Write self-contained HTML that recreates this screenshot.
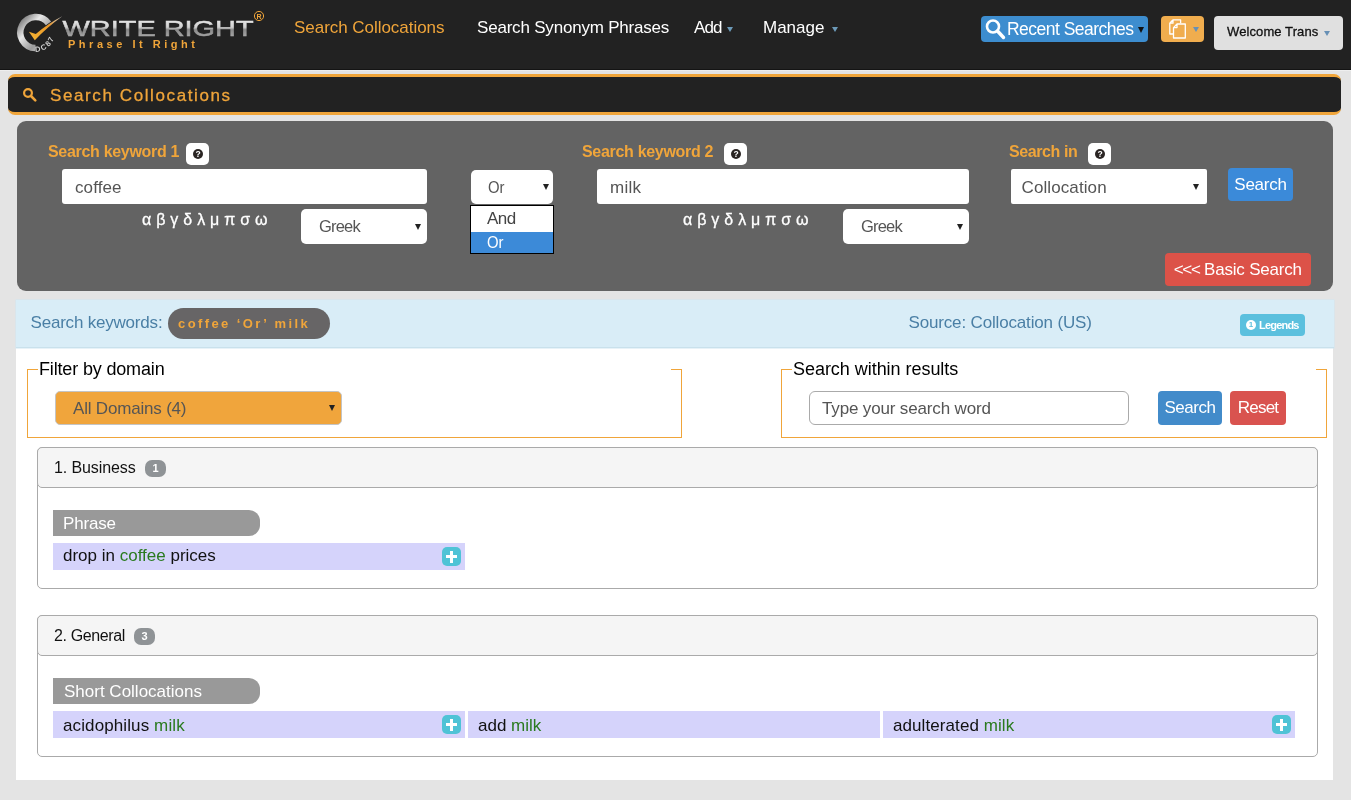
<!DOCTYPE html>
<html lang="en">
<head>
<meta charset="utf-8">
<title>Write Right - Search Collocations</title>
<style>
*{box-sizing:border-box;margin:0;padding:0}
html,body{width:1351px;height:800px;overflow:hidden}
body{will-change:transform;background:#e4e4e4;font-family:"Liberation Sans",sans-serif;color:#000;position:relative}
.abs{position:absolute}
.t{position:absolute;white-space:nowrap;line-height:1}
#hdr{position:absolute;left:0;top:0;width:1351px;height:70px;background:#222;border-bottom:1px solid #141414;box-shadow:0 1px 0 #eeeeee}
.nav{font-size:17px;color:#fff;top:19px}
.caret{position:absolute;width:0;height:0;border-left:3px solid transparent;border-right:3px solid transparent;border-top:5px solid #6c9ab8}
.btn{position:absolute;border-radius:4px;color:#fff;text-align:center;white-space:nowrap}
#titlebar{position:absolute;left:8px;top:74px;width:1333px;height:41px;background:#222;border-top:3px solid #f0a53a;border-bottom:3px solid #f0a53a;border-radius:7px}
#panel{position:absolute;left:17px;top:121px;width:1316px;height:170px;background:#636363;border-radius:9px}
.lbl{font-size:16px;font-weight:bold;color:#f0a53a}
.help{position:absolute;width:23px;height:22px;background:#fff;border-radius:5px}
.help i{position:absolute;left:6.800px;top:6px;width:10.400px;height:10.400px;border-radius:50%;background:#2a2523;color:#fff;font-style:normal;font-size:8.500px;font-weight:bold;line-height:10.800px;text-align:center}
.inp{position:absolute;background:#fff;border-radius:3px;color:#555;font-size:17px;line-height:37px;padding-left:13px;white-space:nowrap}
.sel{position:absolute;background:#fff;border-radius:5px;color:#555;font-size:17px;white-space:nowrap}
.sel b{position:absolute;right:6.500px;top:50%;margin-top:-3px;width:0;height:0;border-left:3px solid transparent;border-right:3px solid transparent;border-top:6px solid #222}
.greek{font-size:16px;color:#fff;letter-spacing:0;margin-top:1px}
#main{position:absolute;left:16px;top:301px;width:1317px;height:479px;background:#fff}
#info{position:absolute;left:0;top:-1px;width:1317.500px;height:48px;background:#d9edf7;border-bottom:1px solid #c9e1ec;box-shadow:0 0 0 0.500px #cfe6f1}
.infot{font-size:17px;color:#4a7fa5}
.fs{position:absolute;border:1px solid #f0a53a;border-top:none;height:69px !important}
.fs:before,.fs:after{content:"";position:absolute;top:0;height:1px;background:#f0a53a}
.fs:before{left:0;width:10px}
.fs:after{right:0;width:10px}
.pan{position:absolute;border:1px solid #aaa;border-radius:5px;background:#fff}
.pan .hd{position:absolute;left:-1px;top:-1px;right:-1px;height:41px;background:#f5f5f5;border:1px solid #aaa;border-radius:5px}
.badge{position:absolute;height:17px;width:21px;border-radius:7px;background:#8f9396;color:#fff;font-size:11px;font-weight:bold;line-height:17px;text-align:center}
.tag{position:absolute;height:26px;width:207px;background:#999;border-radius:0 11px 11px 0;color:#fff;font-size:17px;line-height:28px;padding-left:11px;white-space:nowrap}
.row{position:absolute;height:27px;width:412px;background:#d5d3fb;font-size:17px;line-height:26px;padding-left:10px;white-space:nowrap;color:#111}
.row em{font-style:normal;color:#2a7a1f}
.plus{position:absolute;right:4px;top:4px;width:19px;height:19px;border-radius:5px;background:#4fc3d6}
.plus:before{content:"";position:absolute;left:4.200px;top:8px;width:11px;height:3.200px;background:#fff}
.plus:after{content:"";position:absolute;left:8px;top:4.200px;width:3.200px;height:11.600px;background:#fff}

#n1{letter-spacing:-0.04px}
#n2{letter-spacing:-0.2px}
#n3{letter-spacing:-0.9px;margin-left:1px}
#rs{letter-spacing:-0.52px;font-size:17.5px !important}
#wt{letter-spacing:0.1px;-webkit-text-stroke:0.3px #111}
#tt{letter-spacing:1.6px;margin-left:-1px;margin-top:1px;-webkit-text-stroke:0.3px #f0a53a}
#pt{letter-spacing:2.41px;margin-top:0px}
.lbl{margin-top:1px}
#l1,#l2{letter-spacing:-0.31px}
#l3{letter-spacing:-0.41px}
#i1t{letter-spacing:0.1px}
#i2t{letter-spacing:0.27px}
.greek{letter-spacing:0.25px;-webkit-text-stroke:0.3px #fff}
#s1t,#s2t{letter-spacing:-0.8px;font-size:16.500px}
#sort,#ddor{display:inline-block;transform:scaleX(0.875);transform-origin:0 50%}
#ddand{letter-spacing:-0.55px}
#bst{letter-spacing:-0.26px}
#s3t{letter-spacing:0.1px;margin-left:-0.500px}
#bbt{letter-spacing:-0.2px;margin-left:-0.5px}
#sk{letter-spacing:-0.2px;margin-left:-0.500px}
.infot{margin-top:1px}
#src{letter-spacing:-0.16px;margin-left:-0.500px}
#lgt{letter-spacing:-0.8px}
#fl1{letter-spacing:-0.16px}
#fl2{letter-spacing:-0.04px}
#sdt{letter-spacing:-0.19px}
#swit{letter-spacing:-0.15px}
#b2t{letter-spacing:-0.44px}
#b3t{letter-spacing:-0.75px}
#p1t{letter-spacing:-0.1px}
#p2t{letter-spacing:-0.38px}
#tg1{letter-spacing:-0.16px;margin-left:-1px}
#r2{letter-spacing:0.11px}
#r2,#r3,#r4{position:relative;top:1.700px}
#r1{position:relative;top:0.400px}
#r4{letter-spacing:0.08px}
</style>
</head>
<body>
<div id="hdr">
<svg class="abs" style="left:14px;top:6px" width="256" height="54" viewBox="0 0 256 54">
<defs>
<linearGradient id="sil" x1="0" y1="0" x2="0" y2="1"><stop offset="0" stop-color="#f4f4f4"/><stop offset="0.45" stop-color="#d0d0d0"/><stop offset="0.55" stop-color="#8a8a8a"/><stop offset="1" stop-color="#b8b8b8"/></linearGradient>
<linearGradient id="ring" x1="0" y1="0" x2="1" y2="1"><stop offset="0" stop-color="#6a6a6a"/><stop offset="0.35" stop-color="#e8e8e8"/><stop offset="0.7" stop-color="#9a9a9a"/><stop offset="1" stop-color="#dcdcdc"/></linearGradient>
<linearGradient id="chk" x1="0" y1="1" x2="1" y2="0"><stop offset="0" stop-color="#f7b733"/><stop offset="0.6" stop-color="#e8962a"/><stop offset="1" stop-color="#c9c9c9"/></linearGradient>
</defs>
<path d="M34.5 17.3 A15.6 15.6 0 1 0 21.4 42.1" fill="none" stroke="url(#ring)" stroke-width="6.500"/>
<path d="M14.9 25.8 L21.8 28.1 Q34 17.500 48.3 10.3 Q33 21.500 20.8 34.2 Z" fill="url(#chk)"/>
<text x="21.24 28.38 34.55 38.39" y="45.88 44.78 41.10 36.56" rotate="-6.2 -27.6 -47.2 -64.9" font-family="Liberation Sans, sans-serif" font-size="7.6" font-weight="bold" fill="#d2d2d2">DC87</text>
<text x="48.600" y="30" font-family="Liberation Sans, sans-serif" font-size="22.4" fill="url(#sil)" stroke="url(#sil)" stroke-width="0.5" textLength="191" lengthAdjust="spacingAndGlyphs">WRITE RIGHT</text>
<circle cx="245" cy="10" r="4.6" fill="none" stroke="#f0a53a" stroke-width="1"/>
<text x="242.500" y="12.600" font-family="Liberation Sans, sans-serif" font-size="7" font-weight="bold" fill="#f0a53a">R</text>
<text x="54" y="42" font-family="Liberation Sans, sans-serif" font-size="11" font-weight="bold" fill="#f0a53a" textLength="127" lengthAdjust="spacing">Phrase It Right</text>
</svg>
<span class="t nav" id="n1" style="left:294px;color:#f0a53a">Search Collocations</span>
<span class="t nav" id="n2" style="left:477px">Search Synonym Phrases</span>
<span class="t nav" id="n3" style="left:693px">Add</span><i class="caret" style="left:727px;top:26.500px"></i>
<span class="t nav" id="n4" style="left:763px">Manage</span><i class="caret" style="left:832px;top:27px"></i>
<div class="btn" id="recent" style="left:981px;top:16px;width:167px;height:26px;background:#3d8dcf">
<svg class="abs" style="left:3px;top:2px" width="22" height="22" viewBox="0 0 22 22"><circle cx="9" cy="8.5" r="6" fill="none" stroke="#fff" stroke-width="2.6"/><path d="M13.5 13 L19.5 19.5" stroke="#fff" stroke-width="3.4" stroke-linecap="round"/></svg>
<span class="t" id="rs" style="left:26px;top:4.500px;font-size:18px">Recent Searches</span><i class="caret" style="left:157px;top:10.500px;border-top-color:#111;border-top-width:6.500px;border-left-width:3px;border-right-width:3px"></i></div>
<div class="btn" id="copyb" style="left:1161px;top:16px;width:43px;height:26px;background:#f0ad4e">
<svg class="abs" style="left:7px;top:2px" width="20" height="22" viewBox="0 0 20 22"><path d="M5 1.800 H12.600 V5.300 M5 1.800 L1.800 5.200 V16 H5 M5 1.800 V5.200 H1.800" fill="none" stroke="#fff" stroke-width="1.300" stroke-linejoin="round"/><path d="M9 6 H17.300 V20 H5.500 V9.600 Z M9 6 V9.600 H5.500" fill="none" stroke="#fff" stroke-width="1.300" stroke-linejoin="round"/></svg>
<i class="caret" style="left:32px;top:11px;border-top-color:#6790b5"></i></div>
<div class="btn" id="welcome" style="left:1214px;top:16px;width:129px;height:34px;background:#e0e0e0;color:#111">
<span class="t" id="wt" style="left:13px;top:9px;font-size:13px">Welcome Trans</span><i class="caret" style="left:110px;top:15px;border-top-color:#6790b5"></i></div>
</div>
<div id="titlebar">
<svg class="abs" style="left:14px;top:10px" width="16" height="16" viewBox="0 0 16 16"><circle cx="6" cy="6" r="3.9" fill="none" stroke="#f0a53a" stroke-width="2.2"/><path d="M9 9 L13.300 13.300" stroke="#f0a53a" stroke-width="2.600" stroke-linecap="round"/></svg>
<span class="t" id="tt" style="left:43px;top:9px;font-size:17px;color:#f0a53a">Search Collocations</span>
</div>
<div id="panel">
<span class="t lbl" id="l1" style="left:31px;top:22px">Search keyword 1</span>
<span class="help" style="left:169px;top:22px"><i>?</i></span>
<div class="inp" id="i1" style="left:45px;top:48px;width:365px;height:35px"><span id="i1t">coffee</span></div>
<span class="t greek" id="g1" style="left:125px;top:90px">α β γ δ λ μ π σ ω</span>
<div class="sel" id="s1" style="left:284px;top:88px;width:126px;height:35px;line-height:35px;padding-left:18px"><span id="s1t">Greek</span><b></b></div>
<div class="sel" id="sor" style="left:454px;top:49px;width:82px;height:34px;line-height:36px;padding-left:17px"><span id="sort">Or</span><b style="right:4.500px"></b></div>
<div class="abs" id="dd" style="left:453px;top:84px;width:84px;height:49px;background:#fff;border:1px solid #000;font-size:17px;color:#444">
<div style="height:26px;line-height:25px;padding-left:16px"><span id="ddand">And</span></div>
<div style="height:21px;line-height:21px;padding-left:16px;background:#3c8ad8;color:#fff"><span id="ddor">Or</span></div>
</div>
<span class="t lbl" id="l2" style="left:565px;top:22px">Search keyword 2</span>
<span class="help" style="left:707px;top:22px"><i>?</i></span>
<div class="inp" id="i2" style="left:580px;top:48px;width:372px;height:35px"><span id="i2t">milk</span></div>
<span class="t greek" id="g2" style="left:666px;top:90px">α β γ δ λ μ π σ ω</span>
<div class="sel" id="s2" style="left:826px;top:88px;width:126px;height:35px;line-height:35px;padding-left:18px"><span id="s2t">Greek</span><b></b></div>
<span class="t lbl" id="l3" style="left:992px;top:22px">Search in</span>
<span class="help" style="left:1071px;top:22px"><i>?</i></span>
<div class="sel" id="s3" style="left:994px;top:48px;width:196px;height:35px;line-height:37px;padding-left:11px;border-radius:2px"><span id="s3t">Collocation</span><b style="right:8.500px"></b></div>
<div class="btn" id="bs" style="left:1211px;top:47px;width:65px;height:33px;line-height:34px;background:#3b8ad9;font-size:17px"><span id="bst">Search</span></div>
<div class="btn" id="bb" style="left:1148px;top:132px;width:146px;height:33px;line-height:34px;background:#dc5248;font-size:17px"><span id="bbt"><span style="letter-spacing:-1.300px">&lt;&lt;&lt;</span> Basic Search</span></div>
</div>
<div id="main"><div id="info"></div>
<span class="t infot" id="sk" style="left:15px;top:12px">Search keywords:</span>
<div class="abs" id="pill" style="left:152px;top:7px;width:162px;height:31px;border-radius:16px;background:#676566"></div>
<span class="t" id="pt" style="left:162px;top:16px;font-size:13px;font-weight:bold;color:#f0a53a">coffee ‘Or’ milk</span>
<span class="t infot" id="src" style="left:893px;top:12px">Source: Collocation (US)</span>
<div class="btn" id="leg" style="left:1224px;top:13px;width:65px;height:22px;background:#5bc0de;border-radius:4px">
<i class="abs" style="left:6px;top:6px;width:10px;height:10px;border-radius:50%;background:#fff;color:#5bc0de;font-style:normal;font-weight:bold;font-size:8px;line-height:10px;text-align:center">1</i>
<span class="t" id="lgt" style="left:19px;top:5.500px;font-size:11px;font-weight:bold">Legends</span></div>

<div class="fs" style="left:11px;top:68px;width:655px;height:68px"></div>
<span class="t" id="fl1" style="left:23px;top:59px;font-size:18px">Filter by domain</span>
<div class="sel" id="sd" style="left:39px;top:90px;width:287px;height:34px;line-height:33px;padding-left:17px;background:#f0a53c;border:1px solid #c4c4c4;color:#555"><span id="sdt">All Domains (4)</span><b></b></div>
<div class="fs" style="left:765px;top:68px;width:546px;height:68px"></div>
<span class="t" id="fl2" style="left:777px;top:59px;font-size:18px">Search within results</span>
<div class="abs" id="swi" style="left:793px;top:90px;width:320px;height:34px;border:1px solid #aaa;border-radius:6px;font-size:17px;line-height:33px;padding-left:12px;color:#555;white-space:nowrap"><span id="swit">Type your search word</span></div>
<div class="btn" id="b2" style="left:1142px;top:90px;width:64px;height:34px;line-height:34px;background:#428bca;font-size:17px"><span id="b2t">Search</span></div>
<div class="btn" id="b3" style="left:1214px;top:90px;width:56px;height:34px;line-height:34px;background:#d9534f;font-size:17px"><span id="b3t">Reset</span></div>

<div class="pan" style="left:21px;top:146px;width:1281px;height:142px">
<div class="hd"></div>
<span class="t" id="p1t" style="left:16px;top:12px;font-size:16px;color:#111">1. Business</span>
<span class="badge" style="left:107px;top:12px">1</span>
<div class="tag" style="left:15px;top:62px"><span id="tg1">Phrase</span></div>
<div class="row" style="left:15px;top:95px"><span id="r1">drop in <em>coffee</em> prices</span><i class="plus"></i></div>
</div>

<div class="pan" style="left:21px;top:314px;width:1281px;height:142px">
<div class="hd"></div>
<span class="t" id="p2t" style="left:16px;top:12px;font-size:16px;color:#111">2. General</span>
<span class="badge" style="left:96px;top:12px">3</span>
<div class="tag" style="left:15px;top:62px"><span id="tg2">Short Collocations</span></div>
<div class="row" style="left:15px;top:95px"><span id="r2">acidophilus <em>milk</em></span><i class="plus"></i></div>
<div class="row" style="left:430px;top:95px"><span id="r3">add <em>milk</em></span></div>
<div class="row" style="left:845px;top:95px"><span id="r4">adulterated <em>milk</em></span><i class="plus"></i></div>
</div>
</div>
</body>
</html>
